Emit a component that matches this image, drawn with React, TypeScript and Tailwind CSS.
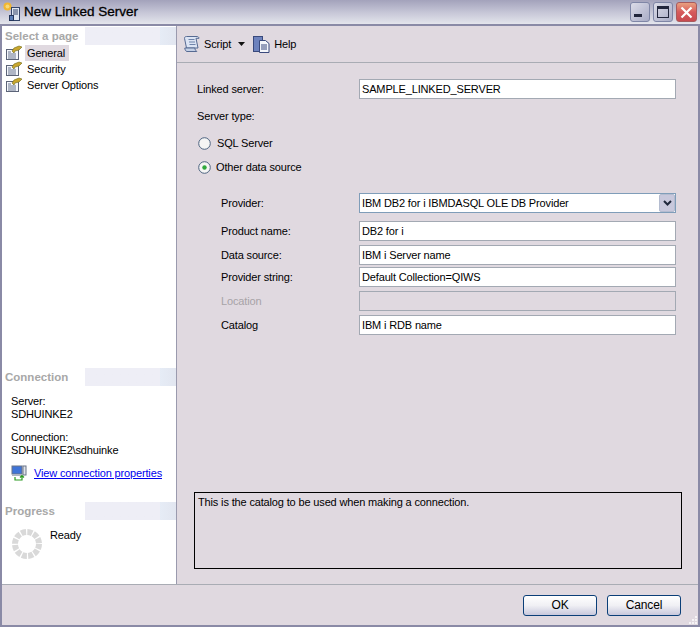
import React from "react";

const font = { fontFamily: '"Liberation Sans", Arial, sans-serif' };

function PageIcon() {
  return (
    <svg width="16" height="16" viewBox="0 0 16 16" className="shrink-0">
      <rect x="0.5" y="4.5" width="12" height="10" fill="#f4f6fb" stroke="#5c6478" />
      <path d="M2 7h3M2 9h8M2 11h8M2 13h8" stroke="#6b7690" strokeWidth="1" />
      <path d="M6 6l2-3 5-2 3 1-3 3-4 1-1 2z" fill="#c9a62e" stroke="#6f6a18" strokeWidth="0.6" />
    </svg>
  );
}

function SectionHead({ label }: { label: string }) {
  return (
    <div className="flex h-[18px] items-stretch">
      <div className="w-[83px] whitespace-nowrap pl-[3px] text-[11.5px] font-bold leading-[18px] tracking-normal text-[#a8a8a8]">
        {label}
      </div>
      <div className="flex-1 bg-gradient-to-r from-[#eeeef6] from-[82%] via-[#e6ecf6] via-[82%] to-[#e2e6f0]" />
    </div>
  );
}

function Row({ label, children, className, disabled }: { label: string; children: React.ReactNode; className?: string; disabled?: boolean }) {
  return (
    <div className={"flex items-center " + (className ?? "")}>
      <div className={"w-[182px] pl-[44px] text-[11px] leading-[14px] " + (disabled ? "text-[#a7a3a7]" : "text-black")}>{label}</div>
      {children}
    </div>
  );
}

function Field({ value, disabled }: { value?: string; disabled?: boolean }) {
  return (
    <div className={"h-[20px] w-[317px] border border-[#a3a9b3] px-[2px] text-[11px] leading-[18px] text-black " + (disabled ? "bg-[#e0d9e0]" : "bg-white")}>
      {value}
    </div>
  );
}

function Radio({ checked, label }: { checked?: boolean; label: string }) {
  return (
    <div className={"flex items-center pl-[21px] text-[11px] leading-[13px] text-black " + (checked ? "gap-[5px]" : "gap-[6px]")}>
      <svg width="13" height="13" viewBox="0 0 13 13">
        <circle cx="6.5" cy="6.5" r="5.8" fill="#f5f5f4" stroke="#4d6480" />
        {checked && <circle cx="6.5" cy="6.5" r="2.2" fill="#2fa83c" />}
      </svg>
      <span>{label}</span>
    </div>
  );
}

function XPButton({ label }: { label: string }) {
  return (
    <div className="flex h-[21px] w-[74px] items-center justify-center rounded-[3px] border border-[#0b3f78] bg-gradient-to-b from-white via-[#f0f0f4] to-[#c8c8dc] text-[12px] text-black">
      {label}
    </div>
  );
}

export default function App() {
  return (
    <div style={font} className="flex h-[627px] w-[700px] flex-col overflow-hidden bg-[#8a8aa6] tracking-[-0.15px]">
      {/* title bar */}
      <div className="flex h-[24px] shrink-0 items-center bg-gradient-to-b from-[#a3a2bb] via-[#c5c5d6] to-[#e4e5ec] pl-[3px] pr-[3px]">
        <svg width="18" height="20" viewBox="0 0 18 20" className="shrink-0">
          <circle cx="4.5" cy="4.5" r="4" fill="#f2b632" />
          <circle cx="4.5" cy="4.5" r="2" fill="#f7d977" />
          <rect x="8.5" y="5.5" width="8" height="13" fill="#dfe6f2" stroke="#34456a" />
          <path d="M10 8h5M10 10h5M10 12h5" stroke="#34456a" />
          <rect x="6.5" y="13.5" width="4" height="5" fill="#5c7fb8" stroke="#24365c" />
        </svg>
        <span className="ml-[3px] text-[13.5px] leading-none tracking-normal text-black [-webkit-text-stroke:0.3px_black]">New Linked Server</span>
        <div className="ml-auto flex gap-[3px]">
          <div className="flex h-[20px] w-[20px] items-end justify-start rounded-[3px] border border-[#7f86a6] bg-gradient-to-br from-[#dcdce8] to-[#a9acc6] pb-[4px] pl-[3px]">
            <div className="h-[3px] w-[8px] bg-[#22263c]" />
          </div>
          <div className="flex h-[20px] w-[20px] items-center justify-center rounded-[3px] border border-[#7f86a6] bg-gradient-to-br from-[#dcdce8] to-[#a9acc6]">
            <div className="h-[12px] w-[12px] border border-t-[3px] border-[#22263c]" />
          </div>
          <div className="flex h-[20px] w-[21px] items-center justify-center rounded-[3px] border border-[#a85a5c] bg-gradient-to-b from-[#e8a080] via-[#d65a5c] to-[#c84a50]">
            <svg width="13" height="13" viewBox="0 0 13 13">
              <path d="M1.5 1.5l10 10M11.5 1.5l-10 10" stroke="white" strokeWidth="2.2" />
            </svg>
          </div>
        </div>
      </div>

      {/* body */}
      <div className="flex min-h-0 flex-1 flex-col border-x-2 border-y-2 border-[#8a8aa6]">
        <div className="flex min-h-0 flex-1">
          {/* sidebar */}
          <div className="flex w-[175px] shrink-0 flex-col border-r border-[#9a9aae] bg-white pt-[1px] text-[11px] text-black">
            <SectionHead label="Select a page" />
            <div className="flex flex-col">
              {["General", "Security", "Server Options"].map((t, i) => (
                <div key={t} className="flex h-[16px] items-center gap-[3px] pl-[4px]">
                  <PageIcon />
                  <span className={"px-[2px] leading-[16px] " + (i === 0 ? "w-[44px] bg-[#e0d9e0]" : "")}>{t}</span>
                </div>
              ))}
            </div>
            <div className="mt-auto">
              <SectionHead label="Connection" />
              <div className="mt-[9px] pl-[9px] leading-[13px]">
                <div>Server:</div>
                <div>SDHUINKE2</div>
                <div className="mt-[10px]">Connection:</div>
                <div>SDHUINKE2\sdhuinke</div>
              </div>
              <div className="mt-[8px] flex h-[16px] items-center gap-[7px] pl-[9px]">
                <svg width="16" height="16" viewBox="0 0 16 16" className="shrink-0">
                  <rect x="1" y="1" width="10" height="8" fill="#3f74d8" stroke="#6a7488" />
                  <rect x="1" y="9" width="10" height="2" fill="#aeb4c2" />
                  <rect x="12" y="1" width="3" height="9" fill="#dfe3ea" stroke="#6a7488" />
                  <path d="M4 12v3h7v-4M9 12.5l2-2 2 2" fill="none" stroke="#2a9a20" strokeWidth="1.2" />
                </svg>
                <span className="whitespace-nowrap text-[#0000ee] underline">View connection properties</span>
              </div>
              <div className="mt-[21px]">
                <SectionHead label="Progress" />
              </div>
              <div className="flex h-[64px] pl-[10px] pt-[9px]">
                <svg width="30" height="30" viewBox="0 0 30 30" className="shrink-0">
                  <circle cx="15" cy="15" r="12" fill="none" stroke="#d9d9d9" strokeWidth="6" strokeDasharray="5 1.28" />
                </svg>
                <span className="ml-[8px] leading-[13px]">Ready</span>
              </div>
            </div>
          </div>

          {/* main */}
          <div className="flex min-w-0 flex-1 flex-col bg-[#e0d9e0]">
            <div className="flex h-[37px] shrink-0 items-center border-b border-[#a9acb4] pl-[7px] text-[11px] text-black">
              <svg width="16" height="18" viewBox="0 0 16 18" className="shrink-0">
                <path d="M2.5 1.5h10.5c1 0 2 .8 2 1.8h-3l2 9.7h-11.5l-2-9.7c-.2-1 .8-1.8 2-1.8z" fill="#dce4f4" stroke="#566a92" />
                <path d="M.8 13h10c0 1.5 1 2.5 2 3.5H3c-1.300 0-2.200-2-2.200-3.500z" fill="#c4d0e6" stroke="#566a92" />
                <path d="M4.500 4.500h6M5 7h6M5.500 9.500h6" stroke="#6f84ab" />
              </svg>
              <span className="ml-[4px]">Script</span>
              <svg width="7" height="4" viewBox="0 0 7 4" className="ml-[7px]"><path d="M0 0h7L3.5 4z" fill="#111" /></svg>
              <svg width="17" height="17" viewBox="0 0 17 17" className="ml-[8px] shrink-0">
                <rect x="0.5" y="0.5" width="9" height="15" fill="#6d82bd" stroke="#39497c" />
                <path d="M6.500 4.500h6l3.500 3v9H6.500z" fill="#f4f6fa" stroke="#39497c" />
                <path d="M8 9h6M8 11h6M8 13h6" stroke="#39497c" />
              </svg>
              <span className="ml-[4px]">Help</span>
            </div>

            <div className="flex min-h-0 flex-1 flex-col pb-[15px] pt-[16px]">
              <div className="flex items-center">
                <div className="w-[182px] pl-[20px] text-[11px] leading-[14px]">Linked server:</div>
                <Field value="SAMPLE_LINKED_SERVER" />
              </div>
              <div className="mt-[10px] pl-[20px] text-[11px] leading-[14px]">Server type:</div>
              <div className="mt-[14px]"><Radio label="SQL Server" /></div>
              <div className="mt-[11px]"><Radio checked label="Other data source" /></div>

              <Row label="Provider:" className="mt-[19px]">
                <div className="flex h-[20px] w-[317px] items-center justify-between border border-[#7f9db9] bg-white pl-[2px] text-[11px]">
                  <span>IBM DB2 for i IBMDASQL OLE DB Provider</span>
                  <div className="flex h-[18px] w-[16px] items-center justify-center rounded-[2px] border border-[#b4bcd0] bg-[#c8c8dc]">
                    <svg width="9" height="6" viewBox="0 0 9 6"><path d="M1 1l3.500 3.500L8 1" fill="none" stroke="#20283c" strokeWidth="2" /></svg>
                  </div>
                </div>
              </Row>
              <Row label="Product name:" className="mt-[8px]"><Field value="DB2 for i" /></Row>
              <Row label="Data source:" className="mt-[4px]"><Field value="IBM i Server name" /></Row>
              <Row label="Provider string:" className="mt-[2px]"><Field value="Default Collection=QIWS" /></Row>
              <Row label="Location" className="mt-[4px]" disabled><Field disabled /></Row>
              <Row label="Catalog" className="mt-[4px]"><Field value="IBM i RDB name" /></Row>

              <div className="ml-[17px] mt-auto h-[77px] w-[488px] border border-black px-[3px] py-[2px] text-[11px] leading-[14px]">
                This is the catalog to be used when making a connection.
              </div>
            </div>
          </div>
        </div>

        {/* footer */}
        <div className="relative flex h-[41px] shrink-0 items-center justify-end gap-[10px] border-t border-[#a9acb4] bg-[#e0d9e0] pr-[17px]">
          <XPButton label="OK" />
          <XPButton label="Cancel" />
          <svg width="9" height="9" viewBox="0 0 9 9" className="absolute bottom-0 right-0">
            <path d="M6 0h2v2H6zM3 3h2v2H3zM6 3h2v2H6zM0 6h2v2H0zM3 6h2v2H3zM6 6h2v2H6z" fill="#f6f4f6" />
          </svg>
        </div>
      </div>
    </div>
  );
}
